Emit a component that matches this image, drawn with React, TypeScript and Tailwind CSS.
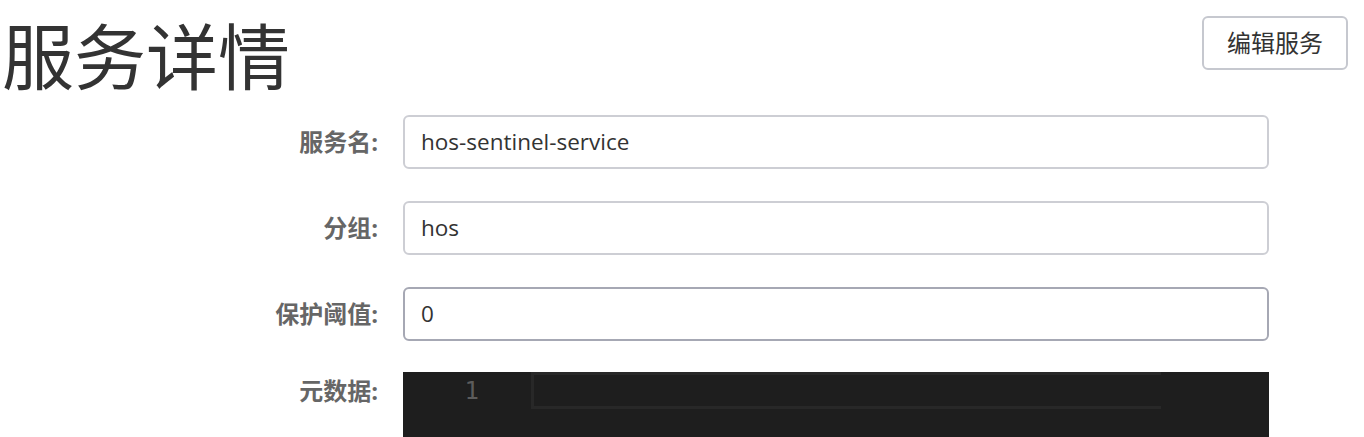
const labelCls =
  "w-[403px] shrink-0 pr-[25px] text-right text-[24px] font-bold text-[#666]";

type FieldRowProps = {
  label: string;
  value: string;
  active?: boolean;
};

const FieldRow = ({ label, value, active }: FieldRowProps) => {
  return (
    <div className="flex items-center">
      <label className={labelCls}>{label}:</label>
      <div
        className={`flex h-[54px] w-[866px] items-center rounded-[6px] border-2 bg-white pl-[16px] text-[22.5px] text-[#333] ${
          active ? "border-[#a6a8b4]" : "border-[#cdced4]"
        }`}
      >
        {value}
      </div>
    </div>
  );
};

const App = () => {
  return (
    <div
      className="h-[437px] w-[1364px] overflow-hidden bg-white"
      style={{ fontFamily: '"Open Sans", "Noto Sans CJK SC", sans-serif' }}
    >
      <div className="flex h-[115px] items-start justify-between pr-[16px]">
        <h1 className="mt-[20px] pl-[2px] text-[72px] leading-none font-normal text-[#333]">
          服务详情
        </h1>
        <button className="mt-[16px] h-[54px] w-[146px] rounded-[6px] border-2 border-[#c6c8cf] bg-white text-[24px] text-[#333]">
          编辑服务
        </button>
      </div>

      <div className="flex flex-col gap-[32px]">
        <FieldRow label="服务名" value="hos-sentinel-service" />
        <FieldRow label="分组" value="hos" />
        <FieldRow label="保护阈值" value="0" active />
      </div>

      <div className="mt-[31px] flex items-start">
        <label className={`${labelCls} flex h-[37px] items-center justify-end`}>
          元数据:
        </label>
        <div className="flex h-[200px] w-[866px] items-start bg-[#1e1e1e]">
          <div
            className="flex h-[37px] w-[128px] items-center justify-end pr-[52px] text-[24px] text-[#5c5c5c]"
            style={{ fontFamily: '"DejaVu Sans Mono", monospace' }}
          >
            1
          </div>
          <div className="h-[37px] w-[630px] border-[3px] border-r-0 border-[#282828]" />
        </div>
      </div>
    </div>
  );
};

export default App;
